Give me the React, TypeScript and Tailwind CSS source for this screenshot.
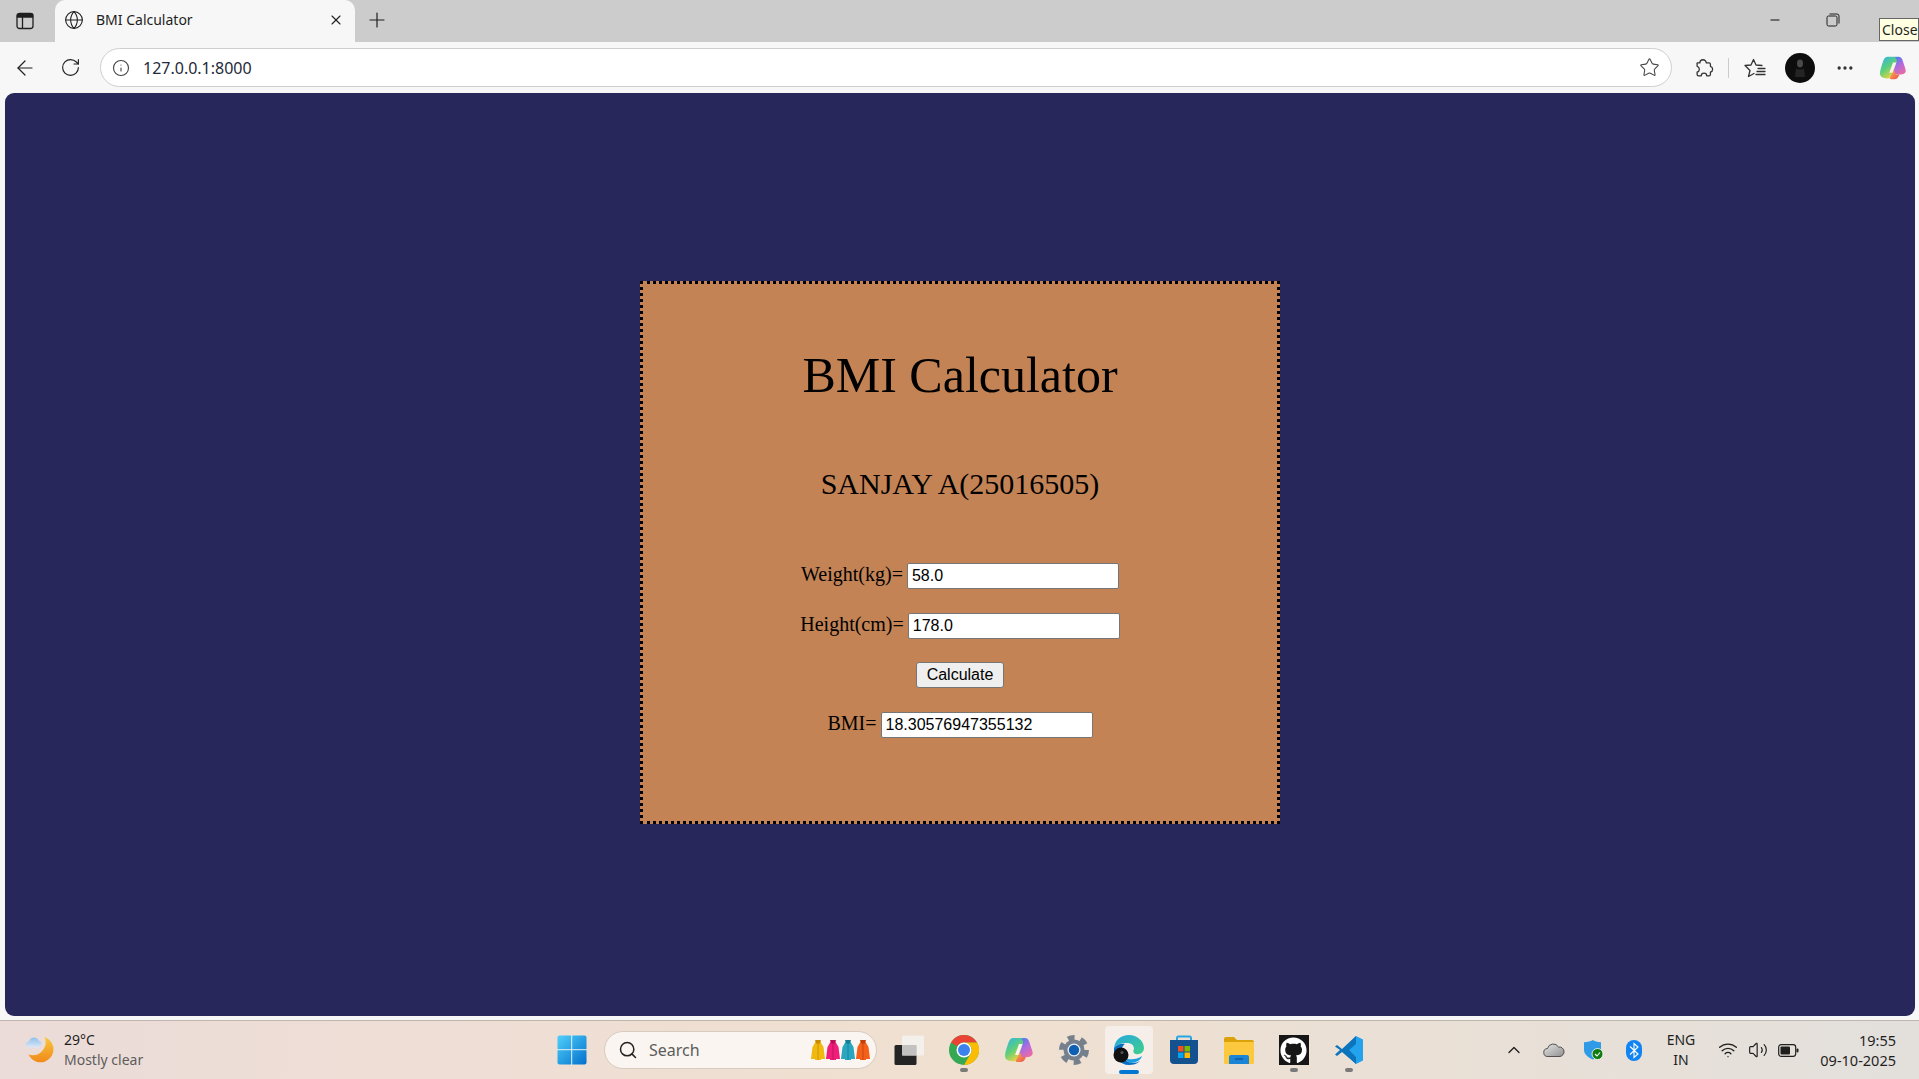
import { ArrowLeft, ChevronUp, Globe, Info, Minus, MoreHorizontal, Plus, RotateCw, Search, Star, Volume2, Wifi, X } from 'lucide-react';
import { FaGithub } from 'react-icons/fa';

const uiFont = 'font-["Noto_Sans",sans-serif]';

function SidebarIcon() {
  return (
    <svg width="18" height="18" viewBox="0 0 18 18" fill="none" stroke="#1f1f1f" strokeWidth="1.3">
      <rect x="1" y="1.5" width="16" height="15" rx="2.5" />
      <path d="M1.5 2.5h15v2.5h-15z" fill="#1f1f1f" />
      <path d="M6.5 4v12" />
    </svg>
  );
}

function RestoreIcon() {
  return (
    <svg width="14" height="14" viewBox="0 0 14 14" fill="none" stroke="#1f1f1f" strokeWidth="1">
      <rect x="1" y="3" width="10" height="10" rx="1.5" />
      <path d="M3.5 1h7.5a2 2 0 0 1 2 2v7.5" />
    </svg>
  );
}

function ExtensionIcon() {
  return (
    <svg width="22" height="22" viewBox="0 0 24 24" fill="none" stroke="#333" strokeWidth="1.400" strokeLinejoin="round">
      <path d="M4.500 6.500h3a3.500 3.500 0 0 1 7 0h3a1.500 1.500 0 0 1 1.500 1.500v2.200a3.200 3.200 0 0 1 0 6.200V19a1.500 1.500 0 0 1-1.500 1.500h-2.500a3 3 0 0 0-6 0H6a1.500 1.500 0 0 1-1.500-1.500v-2.600a3.200 3.200 0 0 0 0-6.200V8a1.500 1.500 0 0 1 0-1.500z" />
    </svg>
  );
}

function FavoritesIcon() {
  return (
    <svg width="22" height="20" viewBox="0 0 22 20" fill="none" stroke="#333" strokeWidth="1.3" strokeLinejoin="round" strokeLinecap="round">
      <path d="M10 15.500L4.500 18.500L6 12.500L1 7.500L7 7L9.500 1.500L12 7L18 7.500" />
      <path d="M14 10.500h7M13 13.500h8M12 16.500h9" />
    </svg>
  );
}

function Avatar({ size }: { size: number }) {
  return (
    <svg width={size} height={size} viewBox="0 0 30 30">
      <circle cx="15" cy="15" r="15" fill="#0d0d0d" />
      <ellipse cx="15" cy="10.5" rx="3" ry="4" fill="#4a4a4a" />
      <path d="M11 15c2 2 6 2 8 0l1 9h-10z" fill="#242424" />
    </svg>
  );
}

function CopilotIcon({ size }: { size: number }) {
  return (
    <svg width={size} height={size} viewBox="0 0 30 30">
      <defs>
        <linearGradient id="cpA" x1="0" y1="0" x2="0.6" y2="1">
          <stop offset="0" stopColor="#2bb4e8" />
          <stop offset="0.55" stopColor="#5fcf7a" />
          <stop offset="1" stopColor="#f2d53c" />
        </linearGradient>
        <linearGradient id="cpB" x1="0.2" y1="0" x2="0.8" y2="1">
          <stop offset="0" stopColor="#3f7ff0" />
          <stop offset="0.5" stopColor="#b06be0" />
          <stop offset="1" stopColor="#f06a9c" />
        </linearGradient>
        <linearGradient id="cpC" x1="0" y1="0" x2="1" y2="1">
          <stop offset="0" stopColor="#f7b733" />
          <stop offset="1" stopColor="#ef4f5f" />
        </linearGradient>
      </defs>
      <path d="M9 3h9c2 0 2.5 1 2 2.5L16 18l-4 7c-1 1.500-3 1.500-5 1-4-.5-6-2-6-5 0-3 1.500-8 3-12 1-3 2.500-6 5-6z" fill="url(#cpA)" />
      <path d="M17 4c1-1 3-1 4-1 2 0 3 1 4 3l3 9c1 3 1 5-1 6-2 1.500-6 1-8 1h-5l3-8 2-6c.5-2-.5-3-2-4z" fill="url(#cpB)" />
      <path d="M12 25l4-8 2 5h4c-1 2-2 5-5 5h-4c-1 0-2-.5-1-2z" fill="url(#cpC)" />
      <path d="M15 9h3.500l-4 11h-3.500z" fill="#fbf3ec" />
    </svg>
  );
}

function WeatherIcon() {
  return (
    <svg width="30" height="30" viewBox="0 0 30 30">
      <defs>
        <linearGradient id="moon" x1="0.5" y1="0" x2="0.5" y2="1">
          <stop offset="0" stopColor="#f9c73d" />
          <stop offset="1" stopColor="#f08a1a" />
        </linearGradient>
        <linearGradient id="wcloud" x1="0.5" y1="0" x2="0.5" y2="1">
          <stop offset="0" stopColor="#8fc0ee" />
          <stop offset="1" stopColor="#dbe7f5" />
        </linearGradient>
      </defs>
      <path d="M19.500 2A13 13 0 1 1 3.500 19.500 13 13 0 0 0 19.500 2z" fill="url(#moon)" />
      <path d="M4 12.500a3 3 0 0 1 0-6A5 5 0 0 1 13.500 5.500a3.500 3.500 0 0 1 3 3.500 3.500 3.500 0 0 1-2.500 3.500z" fill="url(#wcloud)" />
    </svg>
  );
}

function WindowsLogo() {
  return (
    <svg width="30" height="30" viewBox="0 0 30 30">
      <defs>
        <linearGradient id="win" x1="0" y1="0" x2="1" y2="1">
          <stop offset="0" stopColor="#4fd0fb" />
          <stop offset="1" stopColor="#0470cc" />
        </linearGradient>
      </defs>
      <rect x="0.500" y="0.500" width="29" height="29" rx="2" fill="url(#win)" />
      <path d="M14.700 0v30M0 14.700h30" stroke="#e8f0f3" strokeWidth="1" />
    </svg>
  );
}

function Coat({ fill, trim }: { fill: string; trim: string }) {
  return (
    <svg width="14" height="21" viewBox="0 0 14 21">
      <path d="M4.500 2h5l3 5 1.500 12h-4v1h-6v-1H0L1.500 7z" fill={fill} />
      <path d="M4 0h6l-1 3.500H5z" fill={trim} />
      <path d="M7 3v17" stroke={trim} strokeWidth="0.800" />
    </svg>
  );
}

function TaskViewIcon() {
  return (
    <svg width="30" height="30" viewBox="0 0 30 30">
      <rect x="0.500" y="10" width="22" height="20" rx="1.500" fill="#242424" />
      <rect x="8" y="0.500" width="22" height="20" rx="1.500" fill="#f4f2f0" fillOpacity="0.850" />
      <rect x="8" y="10" width="14.500" height="10.500" fill="#c4c2c0" />
    </svg>
  );
}

function ChromeIcon() {
  return (
    <svg width="30" height="30" viewBox="0 0 30 30">
      <circle cx="15" cy="15" r="15" fill="#34a853" />
      <path d="M15 0a15 15 0 0 1 13 7.500H15a7.500 7.500 0 0 0-6.500 3.750L2 7.500A15 15 0 0 1 15 0z" fill="#ea4335" />
      <path d="M28 7.500A15 15 0 0 1 15 30l6.500-11.250A7.500 7.500 0 0 0 21.500 11.250 7.500 7.500 0 0 0 15 7.500z" fill="#fbbc04" />
      <circle cx="15" cy="15" r="7.500" fill="#fff" />
      <circle cx="15" cy="15" r="6" fill="#3b82ee" />
    </svg>
  );
}

function GearIcon() {
  return (
    <svg width="30" height="30" viewBox="0 0 30 30">
      <circle cx="15" cy="15" r="12" fill="none" stroke="#76808c" strokeWidth="6" strokeDasharray="6.500 6.060" />
      <circle cx="15" cy="15" r="10.500" fill="#76808c" />
      <circle cx="15" cy="15" r="6.500" fill="#eef1f4" />
      <circle cx="15" cy="15" r="5.200" fill="#0f5fb3" />
    </svg>
  );
}

function EdgeIcon() {
  return (
    <svg width="32" height="32" viewBox="0 0 32 32">
      <defs>
        <linearGradient id="edgeA" x1="0" y1="0" x2="1" y2="1">
          <stop offset="0" stopColor="#25a7e0" />
          <stop offset="1" stopColor="#3fd08a" />
        </linearGradient>
      </defs>
      <path d="M1 14C2 6 8 1 16 1c8 0 15 6 15 13 0 4-4 7-8 6-3-.5-3-3-2-5 0-4-3-6-7-6-6 0-11 2-13 5z" fill="url(#edgeA)" />
      <path d="M1 14c2-3 7-5 11-4-3 2-4 6-3 10 1 5 6 9 11 9 3 0 5-1 7-2-3 3-7 4-11 4C7 31 0 23 1 14z" fill="#0a6fc2" />
      <path d="M12 24c4 2 12 2 17-2-1 4-6 7-11 7-2 0-5-2-6-5z" fill="#1b9de2" />
      <circle cx="8" cy="21" r="7.500" fill="#111" />
      <circle cx="9" cy="18.500" r="1.500" fill="#555" />
    </svg>
  );
}

function StoreIcon() {
  return (
    <svg width="30" height="30" viewBox="0 0 30 30">
      <path d="M8 6V3a1.500 1.500 0 0 1 1.500-1.500h11A1.500 1.500 0 0 1 22 3v3" fill="none" stroke="#2aa5e8" strokeWidth="2" />
      <path d="M1 5h28v20a4 4 0 0 1-4 4H5a4 4 0 0 1-4-4z" fill="#14518f" />
      <rect x="9" y="11" width="5.500" height="5.500" fill="#f25022" />
      <rect x="15.500" y="11" width="5.500" height="5.500" fill="#7fba00" />
      <rect x="9" y="17.500" width="5.500" height="5.500" fill="#00a4ef" />
      <rect x="15.500" y="17.500" width="5.500" height="5.500" fill="#ffb900" />
    </svg>
  );
}

function FolderIcon() {
  return (
    <svg width="30" height="30" viewBox="0 0 30 30">
      <path d="M0 4a2 2 0 0 1 2-2h8l3 3h15a2 2 0 0 1 2 2v4H0z" fill="#dca20a" />
      <path d="M0 7h30v21a1 1 0 0 1-1 1H1a1 1 0 0 1-1-1z" fill="#fcc93e" />
      <path d="M5 22a2 2 0 0 1 2-2h16a2 2 0 0 1 2 2v7H5z" fill="#1a84d6" />
      <path d="M11 24h8" stroke="#0d4f8a" strokeWidth="1.200" />
    </svg>
  );
}

function GithubIcon() {
  return (
    <div className="flex h-[30px] w-[30px] items-center justify-center bg-[#161616]">
      <FaGithub size={27} color="#ffffff" />
    </div>
  );
}

function VsCodeIcon() {
  return (
    <svg width="30" height="30" viewBox="0 0 30 30">
      <path d="M22 1l7 3.500v21L22 29 8 15.500z" fill="#23a3ee" />
      <path d="M22 1L8 14 3 10 1 11.500 6 15 1 19.500 3 21l5-4 14 12v-7l-7-7 7-6z" fill="#0b74bd" />
    </svg>
  );
}

function ShieldIcon() {
  return (
    <svg width="20" height="20" viewBox="0 0 20 20">
      <path d="M9 0c2 1.500 4 2 8 2.300V10c0 4-3 7.500-8 9.500C4 17.500 0 14 0 10V2.300C4 2 6 1.500 9 0z" fill="#2f9be6" />
      <circle cx="13.500" cy="14" r="5.500" fill="#107c10" stroke="#fff" strokeWidth="0.800" />
      <path d="M11 14l2 2 3-3.500" fill="none" stroke="#fff" strokeWidth="1.100" />
    </svg>
  );
}

function BluetoothBadge() {
  return (
    <svg width="16" height="21" viewBox="0 0 16 21">
      <rect width="16" height="21" rx="8" fill="#0f84f2" />
      <path d="M4 6.500l8 7.500-4 3.500V3.500l4 3.500-8 7.500" fill="none" stroke="#fff" strokeWidth="1.100" />
    </svg>
  );
}

function CloudIcon() {
  return (
    <svg width="22" height="14" viewBox="0 0 22 14">
      <defs>
        <linearGradient id="cloud" x1="0" y1="0" x2="1" y2="1">
          <stop offset="0" stopColor="#e6e6e6" />
          <stop offset="1" stopColor="#8f8f8f" />
        </linearGradient>
      </defs>
      <path d="M5 13.500a4 4 0 0 1-.5-8A6 6 0 0 1 15.500 4a4.800 4.800 0 0 1 1.500 9.500z" fill="url(#cloud)" stroke="#333" strokeWidth="0.800" />
    </svg>
  );
}

function BatteryIcon() {
  return (
    <svg width="21" height="13" viewBox="0 0 21 13">
      <rect x="0.700" y="0.700" width="17" height="11.600" rx="2.500" fill="none" stroke="#1f1f1f" strokeWidth="1.200" />
      <rect x="2.500" y="2.500" width="9.500" height="8" rx="1" fill="#1f1f1f" />
      <rect x="18.500" y="4.500" width="2" height="4" rx="1" fill="#1f1f1f" />
    </svg>
  );
}

function TabBar() {
  return (
    <div className={`flex h-[42px] items-end bg-[#cccccc] ${uiFont}`}>
      <div className="flex h-[40px] w-[55px] shrink-0 items-center pl-[16px] pb-[2px]">
        <SidebarIcon />
      </div>
      <div className="flex h-[42px] w-[300px] shrink-0 items-center rounded-t-[10px] bg-[#f7f7f7] pb-[3px] pl-[9px] pr-[11px]">
        <Globe size={20} strokeWidth={1.3} color="#1f1f1f" />
        <span className="ml-[12px] flex-1 text-[14px] text-[#1f1f1f]">BMI Calculator</span>
        <X size={16} strokeWidth={1.6} color="#1f1f1f" />
      </div>
      <div className="flex h-[40px] w-[44px] shrink-0 items-center justify-center pb-[4px]">
        <Plus size={24} strokeWidth={1.2} color="#1f1f1f" />
      </div>
      <div className="flex h-[40px] flex-1 items-center justify-end pb-[4px] pr-[79px]">
        <Minus size={14} strokeWidth={1.6} color="#000000" />
        <div className="ml-[44px]">
          <RestoreIcon />
        </div>
      </div>
    </div>
  );
}

function Toolbar() {
  return (
    <div className={`flex h-[51px] items-center bg-[#f7f7f7] ${uiFont}`}>
      <div className="flex w-[50px] shrink-0 justify-center">
        <ArrowLeft size={24} strokeWidth={1.2} color="#1f1f1f" />
      </div>
      <div className="flex w-[40px] shrink-0 justify-center">
        <RotateCw size={21} strokeWidth={1.3} color="#1f1f1f" />
      </div>
      <div className="ml-[10px] flex h-[39px] w-[1572px] shrink-0 items-center rounded-full border border-[#cfcfcf] bg-white pl-[11px] pr-[11px]">
        <Info size={18} strokeWidth={1.5} color="#444444" />
        <span className="ml-[13px] flex-1 text-[16px] text-[#1f2a3a]">127.0.0.1:8000</span>
        <Star size={21} strokeWidth={1.2} color="#444444" />
      </div>
      <div className="ml-[20px] flex w-[24px] shrink-0 justify-center">
        <ExtensionIcon />
      </div>
      <div className="ml-[12px] h-[20px] w-px bg-[#cccccc]" />
      <div className="ml-[14px] flex w-[24px] shrink-0 justify-center">
        <FavoritesIcon />
      </div>
      <div className="ml-[18px]">
        <Avatar size={30} />
      </div>
      <div className="ml-[18px] flex w-[24px] shrink-0 justify-center">
        <MoreHorizontal size={20} strokeWidth={2} color="#333333" />
      </div>
      <div className="ml-[22px]">
        <CopilotIcon size={28} />
      </div>
    </div>
  );
}

function Field({ label, value }: { label: string; value: string }) {
  return (
    <div className="flex h-[26px] items-center justify-center gap-[4px]">
      <label className="-translate-y-[1px] text-[20px] leading-[23px]">{label}</label>
      <input
        readOnly
        value={value}
        className='h-[26px] w-[212px] rounded-[2px] border border-[#767676] bg-white px-[4px] font-["Liberation_Sans",sans-serif] text-[16px] text-black outline-none'
      />
    </div>
  );
}

function BmiCard() {
  return (
    <div className='mb-[5px] h-[543px] w-[640px] border-[3px] border-dotted border-black bg-[#c38355] pt-[62px] text-center font-["Liberation_Serif",serif] text-black'>
      <h1 className="text-[50px] leading-[58px]">BMI Calculator</h1>
      <h2 className="mt-[63px] text-[30px] leading-[34px]">SANJAY A(25016505)</h2>
      <div className="mt-[62px] flex flex-col gap-[24px]">
        <Field label="Weight(kg)=" value="58.0" />
        <Field label="Height(cm)=" value="178.0" />
        <div className="-mt-[1px] flex h-[26px] justify-center">
          <button className='h-[26px] w-[88px] rounded-[3px] border border-[#767676] bg-[#efefef] font-["Liberation_Sans",sans-serif] text-[16px]'>
            Calculate
          </button>
        </div>
        <Field label="BMI=" value="18.30576947355132" />
      </div>
    </div>
  );
}

function TaskSlot({ children, mark }: { children: React.ReactNode; mark?: boolean }) {
  return (
    <div className="relative flex h-[48px] w-[55px] items-center justify-center">
      {children}
      {mark && <div className="absolute bottom-[2px] h-[4px] w-[8px] rounded-full bg-[#7a7a7a]" />}
    </div>
  );
}

function Taskbar() {
  return (
    <div className={`flex h-[59px] items-center border-t border-[#bfb6ae] bg-gradient-to-r from-[#ecdcd9] via-[#f0e0d0] to-[#e3e0dc] ${uiFont}`}>
      <div className="flex w-[545px] shrink-0 items-center pl-[25px]">
        <WeatherIcon />
        <div className="ml-[9px] flex flex-col text-[14px] leading-[20px]">
          <span className="text-[#1f1f1f]">29°C</span>
          <span className="text-[#5c5c5c]">Mostly clear</span>
        </div>
      </div>
      <div className="flex w-[59px] shrink-0 justify-start pl-[12px]">
        <WindowsLogo />
      </div>
      <div className="flex h-[38px] w-[273px] shrink-0 items-center rounded-full border border-[#d8ccc0] bg-[#faf5f0] pl-[13px] pr-[6px]">
        <Search size={20} strokeWidth={1.8} color="#222222" />
        <span className="ml-[11px] flex-1 text-[16px] text-[#5c5c5c]">Search</span>
        <div className="flex gap-[1px]">
          <Coat fill="#f0b90f" trim="#c98a00" />
          <Coat fill="#ee1e7a" trim="#b80f55" />
          <Coat fill="#2aa6c0" trim="#137f95" />
          <Coat fill="#f4601a" trim="#c23f0a" />
        </div>
      </div>
      <div className="ml-[4px] flex items-center">
        <TaskSlot><TaskViewIcon /></TaskSlot>
        <TaskSlot mark><ChromeIcon /></TaskSlot>
        <TaskSlot><CopilotIcon size={30} /></TaskSlot>
        <TaskSlot><GearIcon /></TaskSlot>
        <div className="relative mx-[3.500px] flex h-[48px] w-[48px] items-center justify-center rounded-[4px] bg-[#f6efe9]">
          <EdgeIcon />
          <div className="absolute bottom-0 h-[4px] w-[20px] rounded-full bg-[#0078d4]" />
        </div>
        <TaskSlot><StoreIcon /></TaskSlot>
        <TaskSlot><FolderIcon /></TaskSlot>
        <TaskSlot mark><GithubIcon /></TaskSlot>
        <TaskSlot mark><VsCodeIcon /></TaskSlot>
      </div>
      <div className="ml-[118px] flex flex-1 items-center pr-[23px] text-[#1f1f1f]">
        <div className="flex w-[40px] justify-center"><ChevronUp size={20} strokeWidth={1.6} /></div>
        <div className="flex w-[40px] justify-center"><CloudIcon /></div>
        <div className="flex w-[40px] justify-center"><ShieldIcon /></div>
        <div className="flex w-[40px] justify-center"><BluetoothBadge /></div>
        <div className="ml-[3px] flex w-[48px] flex-col items-center text-[14px] leading-[20px]">
          <span>ENG</span>
          <span>IN</span>
        </div>
        <div className="ml-[6px] flex w-[34px] justify-center"><Wifi size={20} strokeWidth={1.6} /></div>
        <div className="flex w-[26px] justify-center"><Volume2 size={20} strokeWidth={1.4} /></div>
        <div className="ml-[2px] flex w-[30px] justify-center"><BatteryIcon /></div>
        <div className="ml-auto flex flex-col items-end text-[14.500px] leading-[20px]">
          <span>19:55</span>
          <span>09-10-2025</span>
        </div>
      </div>
    </div>
  );
}

export default function App() {
  return (
    <div className="relative flex h-[1079px] w-[1919px] flex-col overflow-hidden bg-[#f7f7f7]">
      <TabBar />
      <Toolbar />
      <main className="ml-[5px] mr-[4px] flex h-[923px] items-center justify-center rounded-[9px] bg-[#27275b]">
        <BmiCard />
      </main>
      <div className="h-[4px]" />
      <Taskbar />
      {/* browser tooltip over the close button */}
      <div className={`absolute right-0 top-[18px] h-[23px] w-[40px] border border-[#666666] bg-[#ffffe1] pl-[2px] text-[14px] leading-[21px] text-[#1f1f1f] ${uiFont}`}>
        Close
      </div>
    </div>
  );
}
